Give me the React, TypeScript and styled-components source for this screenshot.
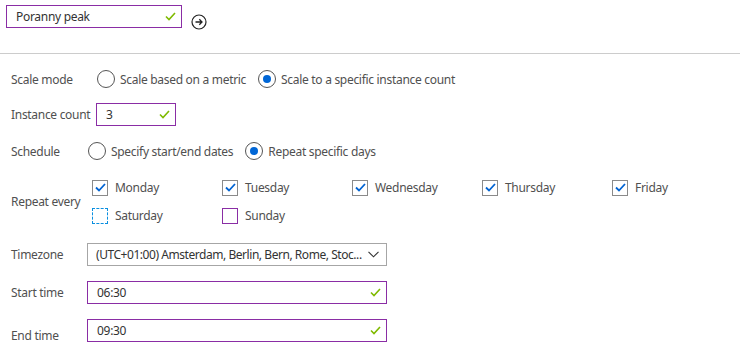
import styled, { createGlobalStyle } from 'styled-components'

const GlobalStyle = createGlobalStyle`
	html, body {
		margin: 0;
		padding: 0;
		background: #ffffff;
	}
	body {
		font-family: 'Noto Sans', 'Open Sans', sans-serif;
		font-size: 12px;
		letter-spacing: -0.3px;
		color: #444444;
	}
`

const purple = '#8a2da5'

const Page = styled.div`
	width: 740px;
	height: 355px;
	overflow: hidden;
`

const Header = styled.div`
	display: flex;
	align-items: flex-start;
	gap: 9px;
	padding: 5px 0 0 6px;
	height: 48px;
	border-bottom: 1px solid #cccccc;
`

const HeaderIcon = styled.svg`
	margin-top: 9px;
	width: 16px;
	height: 16px;
`

const TextBox = styled.div<{ $width: number }>`
	display: flex;
	align-items: center;
	justify-content: space-between;
	box-sizing: border-box;
	width: ${(p) => p.$width}px;
	height: 23px;
	padding: 0 5px 0 9px;
	border: 1px solid ${purple};
	color: #333333;
	font-size: 12px;
`

const Form = styled.div`
	display: flex;
	flex-direction: column;
	padding: 14px 0 0 11px;
`

const Row = styled.div<{ $top: number }>`
	display: flex;
	align-items: center;
	margin-top: ${(p) => p.$top}px;
`

const Label = styled.div<{ $width: number; $shift?: number }>`
	width: ${(p) => p.$width}px;
	flex-shrink: 0;
	color: #505050;
	position: relative;
	top: ${(p) => p.$shift ?? 0}px;
`

const RadioGroup = styled.div`
	display: flex;
	align-items: center;
	gap: 12px;
`

const RadioOption = styled.label`
	display: flex;
	align-items: center;
	gap: 5px;
	color: #505050;
	height: 22px;
`

const RadioCircle = styled.span<{ $checked?: boolean }>`
	box-sizing: border-box;
	width: 18px;
	height: 18px;
	border-radius: 50%;
	border: 1px solid #555555;
	display: flex;
	align-items: center;
	justify-content: center;
	&::after {
		content: '';
		width: 8px;
		height: 8px;
		border-radius: 50%;
		background: ${(p) => (p.$checked ? '#0066d6' : 'transparent')};
	}
`

const DayGrid = styled.div`
	display: grid;
	grid-template-columns: repeat(5, 130px);
	row-gap: 11px;
`

const DayOption = styled.div`
	display: flex;
	align-items: center;
	gap: 7px;
	color: #505050;
	height: 17px;
`

type BoxState = 'checked' | 'focus' | 'invalid'

const boxBorder = (s: BoxState) =>
	s === 'focus' ? '1px dashed #0a8fe0' : s === 'invalid' ? `1px solid ${purple}` : '1px solid #8a8a8a'

const Box = styled.span<{ $state: BoxState }>`
	box-sizing: border-box;
	width: 16px;
	height: 16px;
	border: ${(p) => boxBorder(p.$state)};
	display: flex;
	align-items: center;
	justify-content: center;
`

const Select = styled.div`
	display: flex;
	align-items: center;
	gap: 3px;
	box-sizing: border-box;
	width: 300px;
	height: 23px;
	padding: 0 7px 0 8px;
	border: 1px solid #a6a6a6;
	color: #333333;
	white-space: nowrap;

	svg {
		flex-shrink: 0;
	}
`

const SelectText = styled.span`
	flex: 1;
	overflow: hidden;
	letter-spacing: -0.45px;
`

const Tick = () => (
	<svg width="11" height="9" viewBox="0 0 11 9">
		<path d="M1 4.5 L4 7.5 L10 1" fill="none" stroke="#7fba00" strokeWidth="1.6" />
	</svg>
)

const BlueTick = () => (
	<svg width="11" height="9" viewBox="0 0 11 9">
		<path d="M1 4.5 L4 7.5 L10 1" fill="none" stroke="#0063d3" strokeWidth="1.8" />
	</svg>
)

const days: { name: string; state: BoxState }[] = [
	{ name: 'Monday', state: 'checked' },
	{ name: 'Tuesday', state: 'checked' },
	{ name: 'Wednesday', state: 'checked' },
	{ name: 'Thursday', state: 'checked' },
	{ name: 'Friday', state: 'checked' },
	{ name: 'Saturday', state: 'focus' },
	{ name: 'Sunday', state: 'invalid' },
]

export default function App() {
	return (
		<Page>
			<GlobalStyle />
			<Header>
				<TextBox $width={176}>
					Poranny peak
					<Tick />
				</TextBox>
				<HeaderIcon viewBox="0 0 16 16">
					<circle cx="8" cy="8" r="7" fill="none" stroke="#222" strokeWidth="1.2" />
					<path d="M4.5 8h6.5M8.3 5.2 11 8l-2.7 2.8" fill="none" stroke="#222" strokeWidth="1.3" />
				</HeaderIcon>
			</Header>

			<Form>
				<Row $top={0}>
					<Label $width={86}>Scale mode</Label>
					<RadioGroup>
						<RadioOption>
							<RadioCircle />
							Scale based on a metric
						</RadioOption>
						<RadioOption>
							<RadioCircle $checked />
							Scale to a specific instance count
						</RadioOption>
					</RadioGroup>
				</Row>

				<Row $top={13}>
					<Label $width={85}>Instance count</Label>
					<TextBox $width={80}>
						3
						<Tick />
					</TextBox>
				</Row>

				<Row $top={14}>
					<Label $width={77}>Schedule</Label>
					<RadioGroup>
						<RadioOption>
							<RadioCircle />
							Specify start/end dates
						</RadioOption>
						<RadioOption>
							<RadioCircle $checked />
							Repeat specific days
						</RadioOption>
					</RadioGroup>
				</Row>

				<Row $top={17}>
					<Label $width={81}>Repeat every</Label>
					<DayGrid>
						{days.map((d) => (
							<DayOption key={d.name}>
								<Box $state={d.state}>{d.state === 'checked' && <BlueTick />}</Box>
								{d.name}
							</DayOption>
						))}
					</DayGrid>
				</Row>

				<Row $top={19}>
					<Label $width={76}>Timezone</Label>
					<Select>
						<SelectText>(UTC+01:00) Amsterdam, Berlin, Bern, Rome, Stoc...</SelectText>
						<svg width="11" height="7" viewBox="0 0 11 7">
							<path d="M0.5 0.8 5.5 5.8 10.5 0.8" fill="none" stroke="#333" strokeWidth="1.1" />
						</svg>
					</Select>
				</Row>

				<Row $top={15}>
					<Label $width={76}>Start time</Label>
					<TextBox $width={300}>
						06:30
						<Tick />
					</TextBox>
				</Row>

				<Row $top={15}>
					<Label $width={76} $shift={5}>
						End time
					</Label>
					<TextBox $width={300}>
						09:30
						<Tick />
					</TextBox>
				</Row>
			</Form>
		</Page>
	)
}
